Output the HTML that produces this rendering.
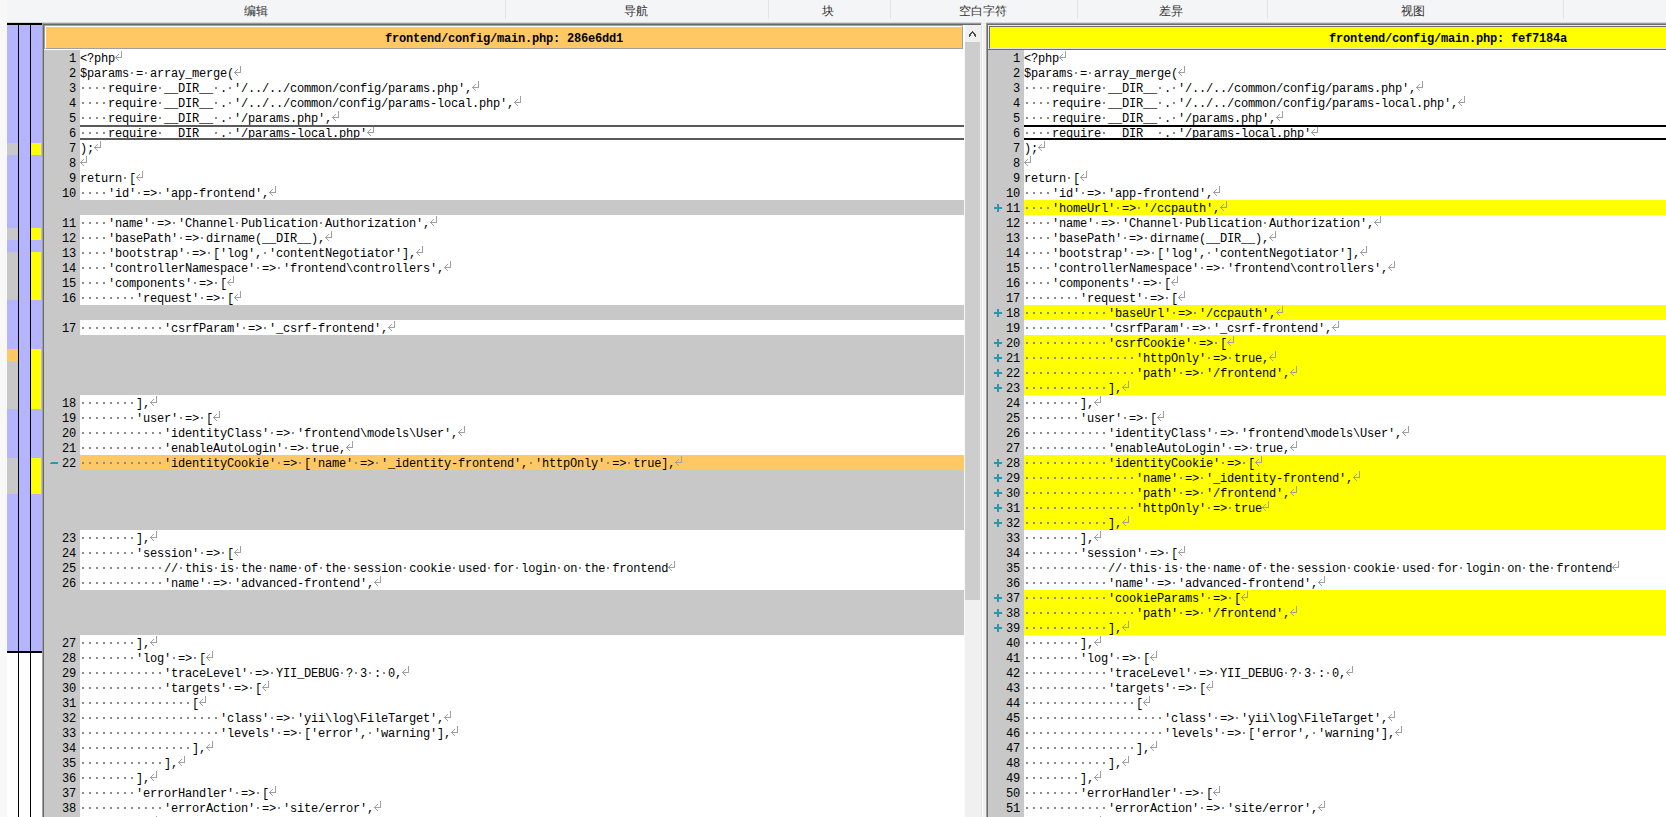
<!DOCTYPE html>
<html><head><meta charset="utf-8"><style>
*{margin:0;padding:0;box-sizing:border-box}
html,body{width:1666px;height:817px;overflow:hidden;background:#f8f8f8;font-family:"Liberation Sans",sans-serif}
#tb{position:absolute;left:7px;top:0;width:1659px;height:23px;background:#f4f5f7}
#tb .sep{position:absolute;top:0;width:1px;height:19px;background:#e1e3e6}
#tb .lb{position:absolute;top:4px;font-size:12px;line-height:14px;color:#333;white-space:nowrap}
.hl{position:absolute;height:1px}
#loc{position:absolute;left:7px;top:23px;width:35px;height:794px;background:#fff}
#loc .lav{position:absolute;left:0;top:0;width:35px;height:630px;background:#b4b4ff;border-top:2px solid #000;border-bottom:2px solid #000}
#loc .vl{position:absolute;top:0;width:1px;height:794px;background:#000}
#loc .blk{position:absolute}
.pane{position:absolute;top:50px;height:767px;overflow:hidden;background:#fff}
.row{position:absolute;left:0;width:100%;height:15px;font:12px/19px "Liberation Mono",monospace;letter-spacing:-0.2px;color:#000}
.row.f{background:#c8c8c8}
.row b{position:absolute;left:0;top:0;width:36px;height:15px;background:#c8c8c8;font-weight:normal;text-align:right;padding-right:4px}
.row p{position:absolute;left:36px;top:0;right:0;height:15px;white-space:pre;overflow:hidden}
.row.r p{background:#ffc864}
.row.a p{background:#ffff00}
.row.sel p{border-top:2px solid #5a5a5a;border-bottom:2px solid #5a5a5a;line-height:15px}
#pr .row.sel p{border-color:#000}
.row s{display:inline-block;vertical-align:top;height:15px;text-decoration:none;background:linear-gradient(90deg,#8c8c8c 2px,transparent 2px) 2px 7px/7px 2px repeat-x}
.row.sel s{height:11px;background-position:2px 5px}
.row i{display:inline-block;vertical-align:top;width:7px;height:15px;position:relative}
.row i::before{content:"";position:absolute;left:0;top:0;width:1px;height:1px;box-shadow:6px 1px #a0a0a0,6px 2px #a0a0a0,6px 3px #a0a0a0,6px 4px #a0a0a0,6px 5px #a0a0a0,6px 6px #a0a0a0,6px 7px #a0a0a0,0px 7px #a0a0a0,1px 7px #a0a0a0,2px 7px #a0a0a0,3px 7px #a0a0a0,4px 7px #a0a0a0,5px 7px #a0a0a0,3px 4px #a0a0a0,2px 5px #a0a0a0,1px 6px #a0a0a0,1px 8px #a0a0a0,2px 9px #a0a0a0,3px 10px #a0a0a0}
.row.sel i{height:11px}
.row.sel i::before{top:-2px}
.row u{position:absolute;left:6px;top:4px;width:1px;height:1px}
.row u.pl::before{content:"";position:absolute;left:0;top:0;width:1px;height:1px;box-shadow:0px 3px #2a97ad,0px 4px #2a97ad,1px 3px #2a97ad,1px 4px #2a97ad,2px 3px #2a97ad,2px 4px #2a97ad,3px 3px #2a97ad,3px 4px #2a97ad,4px 3px #2a97ad,4px 4px #2a97ad,5px 3px #2a97ad,5px 4px #2a97ad,6px 3px #2a97ad,6px 4px #2a97ad,7px 3px #2a97ad,7px 4px #2a97ad,3px 0px #2a97ad,3px 1px #2a97ad,3px 2px #2a97ad,3px 5px #2a97ad,3px 6px #2a97ad,3px 7px #2a97ad,4px 0px #2a97ad,4px 1px #2a97ad,4px 2px #2a97ad,4px 5px #2a97ad,4px 6px #2a97ad,4px 7px #2a97ad}
.row u.mi{top:7px}
.row u.mi::before{content:"";position:absolute;left:0;top:0;width:1px;height:1px;box-shadow:0px 0px #2a97ad,0px 1px #2a97ad,1px 0px #2a97ad,1px 1px #2a97ad,2px 0px #2a97ad,2px 1px #2a97ad,3px 0px #2a97ad,3px 1px #2a97ad,4px 0px #2a97ad,4px 1px #2a97ad,5px 0px #2a97ad,5px 1px #2a97ad,6px 0px #2a97ad,6px 1px #2a97ad,7px 0px #2a97ad,7px 1px #2a97ad}
.hdr{position:absolute;font:bold 12px/15px "Liberation Mono",monospace;letter-spacing:-0.2px;color:#000;text-align:center;white-space:nowrap}
#scr{position:absolute;left:965px;top:25px;width:16px;height:792px;background:#f0f0f0}
#scr .th{position:absolute;left:0;top:17px;width:15px;height:558px;background:#cdcdcd}
#scr .ch{position:absolute;left:4px;top:6px;width:1px;height:1px}
#scr .ch::before{content:"";position:absolute;left:0;top:0;width:1px;height:1px;box-shadow:3px 0px #505050,2px 1px #505050,3px 1px #505050,4px 1px #505050,1px 2px #505050,2px 2px #505050,4px 2px #505050,5px 2px #505050,0px 3px #505050,1px 3px #505050,5px 3px #505050,6px 3px #505050,0px 4px #505050,1px 4px #505050,5px 4px #505050,6px 4px #505050,0px 5px #505050,6px 5px #505050}
</style></head><body>
<div id="tb"><div class="sep" style="left:498px"></div><div class="sep" style="left:761px"></div><div class="sep" style="left:883px"></div><div class="sep" style="left:1070px"></div><div class="sep" style="left:1260px"></div><div class="sep" style="left:1556px"></div><div class="lb" style="left:209px;width:80px;text-align:center">编辑</div><div class="lb" style="left:589px;width:80px;text-align:center">导航</div><div class="lb" style="left:781px;width:80px;text-align:center">块</div><div class="lb" style="left:936px;width:80px;text-align:center">空白字符</div><div class="lb" style="left:1124px;width:80px;text-align:center">差异</div><div class="lb" style="left:1366px;width:80px;text-align:center">视图</div></div>
<div id="loc"><div class="lav"></div><div class="blk" style="left:0px;top:120px;width:11px;height:12px;background:#c8c8c8"></div><div class="blk" style="left:24px;top:120px;width:10px;height:12px;background:#ffff00"></div><div class="blk" style="left:0px;top:205px;width:11px;height:12px;background:#c8c8c8"></div><div class="blk" style="left:24px;top:205px;width:10px;height:12px;background:#ffff00"></div><div class="blk" style="left:0px;top:229px;width:11px;height:48px;background:#c8c8c8"></div><div class="blk" style="left:24px;top:229px;width:10px;height:48px;background:#ffff00"></div><div class="blk" style="left:0px;top:326px;width:11px;height:12px;background:#ffc864"></div><div class="blk" style="left:0px;top:338px;width:11px;height:48px;background:#c8c8c8"></div><div class="blk" style="left:24px;top:326px;width:10px;height:60px;background:#ffff00"></div><div class="blk" style="left:0px;top:435px;width:11px;height:36px;background:#c8c8c8"></div><div class="blk" style="left:24px;top:435px;width:10px;height:36px;background:#ffff00"></div><div class="vl" style="left:11px"></div><div class="vl" style="left:23px"></div></div>

<div class="hl" style="left:7px;top:22px;width:975px;background:#d8d8d8"></div>
<div class="hl" style="left:42px;top:23px;width:940px;background:#999"></div>
<div class="hl" style="left:43px;top:24px;width:938px;background:#696969"></div>
<div style="position:absolute;left:42px;top:23px;width:1px;height:794px;background:#a0a0a0"></div>
<div style="position:absolute;left:43px;top:24px;width:1px;height:793px;background:#696969"></div>
<div style="position:absolute;left:44px;top:25px;width:921px;height:25px;background:#fff"></div>
<div style="position:absolute;left:44px;top:25px;width:919px;height:1px;background:#a0a0a0"></div><div style="position:absolute;left:44px;top:25px;width:1px;height:24px;background:#a0a0a0"></div><div class="hdr" style="left:45px;top:26px;width:918px;height:23px;border-top:1px solid #fff;border-left:1px solid #fff;border-right:1px solid #a0a0a0;border-bottom:1px solid #a0a0a0;background:#ffc864;padding-top:5px">frontend/config/main.php: 286e6dd1</div>
<div style="position:absolute;left:981px;top:25px;width:5px;height:792px;background:#f0f0f0"></div>
<div style="position:absolute;left:981px;top:25px;width:1px;height:792px;background:#e3e3e3"></div>
<div style="position:absolute;left:982px;top:25px;width:1px;height:792px;background:#fff"></div>
<div class="hl" style="left:981px;top:23px;width:5px;background:#e8e8e8"></div>
<div class="hl" style="left:981px;top:24px;width:5px;background:#f4f4f4"></div>
<div class="hl" style="left:986px;top:22px;width:680px;background:#d8d8d8"></div>
<div class="hl" style="left:986px;top:23px;width:680px;background:#999"></div>
<div class="hl" style="left:987px;top:24px;width:679px;background:#696969"></div>
<div style="position:absolute;left:986px;top:23px;width:1px;height:794px;background:#a0a0a0"></div>
<div style="position:absolute;left:987px;top:24px;width:1px;height:793px;background:#696969"></div>
<div style="position:absolute;left:988px;top:25px;width:678px;height:24px;background:#ececec"></div><div style="position:absolute;left:987px;top:49px;width:679px;height:1px;background:#696969"></div>
<div class="hdr" style="left:989px;top:26px;width:918px;height:23px;border:1px solid #6a6a70;border-bottom-color:#e3e3ea;background:#ffff00;padding-top:5px">frontend/config/main.php: fef7184a</div>
<div id="scr"><div class="ch"></div><div class="th"></div></div>

<div class="pane" id="pl" style="left:44px;width:920px">
<div class="row n" style="top:0px"><b>1</b><p>&lt;?php<i></i></p></div>
<div class="row n" style="top:15px"><b>2</b><p>$params<s style="width:7px"></s>=<s style="width:7px"></s>array_merge(<i></i></p></div>
<div class="row n" style="top:30px"><b>3</b><p><s style="width:28px"></s>require<s style="width:7px"></s>__DIR__<s style="width:7px"></s>.<s style="width:7px"></s>'/../../common/config/params.php',<i></i></p></div>
<div class="row n" style="top:45px"><b>4</b><p><s style="width:28px"></s>require<s style="width:7px"></s>__DIR__<s style="width:7px"></s>.<s style="width:7px"></s>'/../../common/config/params-local.php',<i></i></p></div>
<div class="row n" style="top:60px"><b>5</b><p><s style="width:28px"></s>require<s style="width:7px"></s>__DIR__<s style="width:7px"></s>.<s style="width:7px"></s>'/params.php',<i></i></p></div>
<div class="row n sel" style="top:75px"><b>6</b><p><s style="width:28px"></s>require<s style="width:7px"></s>__DIR__<s style="width:7px"></s>.<s style="width:7px"></s>'/params-local.php'<i></i></p></div>
<div class="row n" style="top:90px"><b>7</b><p>);<i></i></p></div>
<div class="row n" style="top:105px"><b>8</b><p><i></i></p></div>
<div class="row n" style="top:120px"><b>9</b><p>return<s style="width:7px"></s>[<i></i></p></div>
<div class="row n" style="top:135px"><b>10</b><p><s style="width:28px"></s>'id'<s style="width:7px"></s>=&gt;<s style="width:7px"></s>'app-frontend',<i></i></p></div>
<div class="row f" style="top:150px"></div>
<div class="row n" style="top:165px"><b>11</b><p><s style="width:28px"></s>'name'<s style="width:7px"></s>=&gt;<s style="width:7px"></s>'Channel<s style="width:7px"></s>Publication<s style="width:7px"></s>Authorization',<i></i></p></div>
<div class="row n" style="top:180px"><b>12</b><p><s style="width:28px"></s>'basePath'<s style="width:7px"></s>=&gt;<s style="width:7px"></s>dirname(__DIR__),<i></i></p></div>
<div class="row n" style="top:195px"><b>13</b><p><s style="width:28px"></s>'bootstrap'<s style="width:7px"></s>=&gt;<s style="width:7px"></s>['log',<s style="width:7px"></s>'contentNegotiator'],<i></i></p></div>
<div class="row n" style="top:210px"><b>14</b><p><s style="width:28px"></s>'controllerNamespace'<s style="width:7px"></s>=&gt;<s style="width:7px"></s>'frontend\controllers',<i></i></p></div>
<div class="row n" style="top:225px"><b>15</b><p><s style="width:28px"></s>'components'<s style="width:7px"></s>=&gt;<s style="width:7px"></s>[<i></i></p></div>
<div class="row n" style="top:240px"><b>16</b><p><s style="width:56px"></s>'request'<s style="width:7px"></s>=&gt;<s style="width:7px"></s>[<i></i></p></div>
<div class="row f" style="top:255px"></div>
<div class="row n" style="top:270px"><b>17</b><p><s style="width:84px"></s>'csrfParam'<s style="width:7px"></s>=&gt;<s style="width:7px"></s>'_csrf-frontend',<i></i></p></div>
<div class="row f" style="top:285px"></div>
<div class="row f" style="top:300px"></div>
<div class="row f" style="top:315px"></div>
<div class="row f" style="top:330px"></div>
<div class="row n" style="top:345px"><b>18</b><p><s style="width:56px"></s>],<i></i></p></div>
<div class="row n" style="top:360px"><b>19</b><p><s style="width:56px"></s>'user'<s style="width:7px"></s>=&gt;<s style="width:7px"></s>[<i></i></p></div>
<div class="row n" style="top:375px"><b>20</b><p><s style="width:84px"></s>'identityClass'<s style="width:7px"></s>=&gt;<s style="width:7px"></s>'frontend\models\User',<i></i></p></div>
<div class="row n" style="top:390px"><b>21</b><p><s style="width:84px"></s>'enableAutoLogin'<s style="width:7px"></s>=&gt;<s style="width:7px"></s>true,<i></i></p></div>
<div class="row r" style="top:405px"><b><u class="mi"></u>22</b><p><s style="width:84px"></s>'identityCookie'<s style="width:7px"></s>=&gt;<s style="width:7px"></s>['name'<s style="width:7px"></s>=&gt;<s style="width:7px"></s>'_identity-frontend',<s style="width:7px"></s>'httpOnly'<s style="width:7px"></s>=&gt;<s style="width:7px"></s>true],<i></i></p></div>
<div class="row f" style="top:420px"></div>
<div class="row f" style="top:435px"></div>
<div class="row f" style="top:450px"></div>
<div class="row f" style="top:465px"></div>
<div class="row n" style="top:480px"><b>23</b><p><s style="width:56px"></s>],<i></i></p></div>
<div class="row n" style="top:495px"><b>24</b><p><s style="width:56px"></s>'session'<s style="width:7px"></s>=&gt;<s style="width:7px"></s>[<i></i></p></div>
<div class="row n" style="top:510px"><b>25</b><p><s style="width:84px"></s>//<s style="width:7px"></s>this<s style="width:7px"></s>is<s style="width:7px"></s>the<s style="width:7px"></s>name<s style="width:7px"></s>of<s style="width:7px"></s>the<s style="width:7px"></s>session<s style="width:7px"></s>cookie<s style="width:7px"></s>used<s style="width:7px"></s>for<s style="width:7px"></s>login<s style="width:7px"></s>on<s style="width:7px"></s>the<s style="width:7px"></s>frontend<i></i></p></div>
<div class="row n" style="top:525px"><b>26</b><p><s style="width:84px"></s>'name'<s style="width:7px"></s>=&gt;<s style="width:7px"></s>'advanced-frontend',<i></i></p></div>
<div class="row f" style="top:540px"></div>
<div class="row f" style="top:555px"></div>
<div class="row f" style="top:570px"></div>
<div class="row n" style="top:585px"><b>27</b><p><s style="width:56px"></s>],<i></i></p></div>
<div class="row n" style="top:600px"><b>28</b><p><s style="width:56px"></s>'log'<s style="width:7px"></s>=&gt;<s style="width:7px"></s>[<i></i></p></div>
<div class="row n" style="top:615px"><b>29</b><p><s style="width:84px"></s>'traceLevel'<s style="width:7px"></s>=&gt;<s style="width:7px"></s>YII_DEBUG<s style="width:7px"></s>?<s style="width:7px"></s>3<s style="width:7px"></s>:<s style="width:7px"></s>0,<i></i></p></div>
<div class="row n" style="top:630px"><b>30</b><p><s style="width:84px"></s>'targets'<s style="width:7px"></s>=&gt;<s style="width:7px"></s>[<i></i></p></div>
<div class="row n" style="top:645px"><b>31</b><p><s style="width:112px"></s>[<i></i></p></div>
<div class="row n" style="top:660px"><b>32</b><p><s style="width:140px"></s>'class'<s style="width:7px"></s>=&gt;<s style="width:7px"></s>'yii\log\FileTarget',<i></i></p></div>
<div class="row n" style="top:675px"><b>33</b><p><s style="width:140px"></s>'levels'<s style="width:7px"></s>=&gt;<s style="width:7px"></s>['error',<s style="width:7px"></s>'warning'],<i></i></p></div>
<div class="row n" style="top:690px"><b>34</b><p><s style="width:112px"></s>],<i></i></p></div>
<div class="row n" style="top:705px"><b>35</b><p><s style="width:84px"></s>],<i></i></p></div>
<div class="row n" style="top:720px"><b>36</b><p><s style="width:56px"></s>],<i></i></p></div>
<div class="row n" style="top:735px"><b>37</b><p><s style="width:56px"></s>'errorHandler'<s style="width:7px"></s>=&gt;<s style="width:7px"></s>[<i></i></p></div>
<div class="row n" style="top:750px"><b>38</b><p><s style="width:84px"></s>'errorAction'<s style="width:7px"></s>=&gt;<s style="width:7px"></s>'site/error',<i></i></p></div>
<div class="row n" style="top:765px"><b>39</b><p><s style="width:56px"></s>],<i></i></p></div>
</div>
<div class="pane" id="pr" style="left:988px;width:678px">
<div class="row n" style="top:0px"><b>1</b><p>&lt;?php<i></i></p></div>
<div class="row n" style="top:15px"><b>2</b><p>$params<s style="width:7px"></s>=<s style="width:7px"></s>array_merge(<i></i></p></div>
<div class="row n" style="top:30px"><b>3</b><p><s style="width:28px"></s>require<s style="width:7px"></s>__DIR__<s style="width:7px"></s>.<s style="width:7px"></s>'/../../common/config/params.php',<i></i></p></div>
<div class="row n" style="top:45px"><b>4</b><p><s style="width:28px"></s>require<s style="width:7px"></s>__DIR__<s style="width:7px"></s>.<s style="width:7px"></s>'/../../common/config/params-local.php',<i></i></p></div>
<div class="row n" style="top:60px"><b>5</b><p><s style="width:28px"></s>require<s style="width:7px"></s>__DIR__<s style="width:7px"></s>.<s style="width:7px"></s>'/params.php',<i></i></p></div>
<div class="row n sel" style="top:75px"><b>6</b><p><s style="width:28px"></s>require<s style="width:7px"></s>__DIR__<s style="width:7px"></s>.<s style="width:7px"></s>'/params-local.php'<i></i></p></div>
<div class="row n" style="top:90px"><b>7</b><p>);<i></i></p></div>
<div class="row n" style="top:105px"><b>8</b><p><i></i></p></div>
<div class="row n" style="top:120px"><b>9</b><p>return<s style="width:7px"></s>[<i></i></p></div>
<div class="row n" style="top:135px"><b>10</b><p><s style="width:28px"></s>'id'<s style="width:7px"></s>=&gt;<s style="width:7px"></s>'app-frontend',<i></i></p></div>
<div class="row a" style="top:150px"><b><u class="pl"></u>11</b><p><s style="width:28px"></s>'homeUrl'<s style="width:7px"></s>=&gt;<s style="width:7px"></s>'/ccpauth',<i></i></p></div>
<div class="row n" style="top:165px"><b>12</b><p><s style="width:28px"></s>'name'<s style="width:7px"></s>=&gt;<s style="width:7px"></s>'Channel<s style="width:7px"></s>Publication<s style="width:7px"></s>Authorization',<i></i></p></div>
<div class="row n" style="top:180px"><b>13</b><p><s style="width:28px"></s>'basePath'<s style="width:7px"></s>=&gt;<s style="width:7px"></s>dirname(__DIR__),<i></i></p></div>
<div class="row n" style="top:195px"><b>14</b><p><s style="width:28px"></s>'bootstrap'<s style="width:7px"></s>=&gt;<s style="width:7px"></s>['log',<s style="width:7px"></s>'contentNegotiator'],<i></i></p></div>
<div class="row n" style="top:210px"><b>15</b><p><s style="width:28px"></s>'controllerNamespace'<s style="width:7px"></s>=&gt;<s style="width:7px"></s>'frontend\controllers',<i></i></p></div>
<div class="row n" style="top:225px"><b>16</b><p><s style="width:28px"></s>'components'<s style="width:7px"></s>=&gt;<s style="width:7px"></s>[<i></i></p></div>
<div class="row n" style="top:240px"><b>17</b><p><s style="width:56px"></s>'request'<s style="width:7px"></s>=&gt;<s style="width:7px"></s>[<i></i></p></div>
<div class="row a" style="top:255px"><b><u class="pl"></u>18</b><p><s style="width:84px"></s>'baseUrl'<s style="width:7px"></s>=&gt;<s style="width:7px"></s>'/ccpauth',<i></i></p></div>
<div class="row n" style="top:270px"><b>19</b><p><s style="width:84px"></s>'csrfParam'<s style="width:7px"></s>=&gt;<s style="width:7px"></s>'_csrf-frontend',<i></i></p></div>
<div class="row a" style="top:285px"><b><u class="pl"></u>20</b><p><s style="width:84px"></s>'csrfCookie'<s style="width:7px"></s>=&gt;<s style="width:7px"></s>[<i></i></p></div>
<div class="row a" style="top:300px"><b><u class="pl"></u>21</b><p><s style="width:112px"></s>'httpOnly'<s style="width:7px"></s>=&gt;<s style="width:7px"></s>true,<i></i></p></div>
<div class="row a" style="top:315px"><b><u class="pl"></u>22</b><p><s style="width:112px"></s>'path'<s style="width:7px"></s>=&gt;<s style="width:7px"></s>'/frontend',<i></i></p></div>
<div class="row a" style="top:330px"><b><u class="pl"></u>23</b><p><s style="width:84px"></s>],<i></i></p></div>
<div class="row n" style="top:345px"><b>24</b><p><s style="width:56px"></s>],<i></i></p></div>
<div class="row n" style="top:360px"><b>25</b><p><s style="width:56px"></s>'user'<s style="width:7px"></s>=&gt;<s style="width:7px"></s>[<i></i></p></div>
<div class="row n" style="top:375px"><b>26</b><p><s style="width:84px"></s>'identityClass'<s style="width:7px"></s>=&gt;<s style="width:7px"></s>'frontend\models\User',<i></i></p></div>
<div class="row n" style="top:390px"><b>27</b><p><s style="width:84px"></s>'enableAutoLogin'<s style="width:7px"></s>=&gt;<s style="width:7px"></s>true,<i></i></p></div>
<div class="row a" style="top:405px"><b><u class="pl"></u>28</b><p><s style="width:84px"></s>'identityCookie'<s style="width:7px"></s>=&gt;<s style="width:7px"></s>[<i></i></p></div>
<div class="row a" style="top:420px"><b><u class="pl"></u>29</b><p><s style="width:112px"></s>'name'<s style="width:7px"></s>=&gt;<s style="width:7px"></s>'_identity-frontend',<i></i></p></div>
<div class="row a" style="top:435px"><b><u class="pl"></u>30</b><p><s style="width:112px"></s>'path'<s style="width:7px"></s>=&gt;<s style="width:7px"></s>'/frontend',<i></i></p></div>
<div class="row a" style="top:450px"><b><u class="pl"></u>31</b><p><s style="width:112px"></s>'httpOnly'<s style="width:7px"></s>=&gt;<s style="width:7px"></s>true<i></i></p></div>
<div class="row a" style="top:465px"><b><u class="pl"></u>32</b><p><s style="width:84px"></s>],<i></i></p></div>
<div class="row n" style="top:480px"><b>33</b><p><s style="width:56px"></s>],<i></i></p></div>
<div class="row n" style="top:495px"><b>34</b><p><s style="width:56px"></s>'session'<s style="width:7px"></s>=&gt;<s style="width:7px"></s>[<i></i></p></div>
<div class="row n" style="top:510px"><b>35</b><p><s style="width:84px"></s>//<s style="width:7px"></s>this<s style="width:7px"></s>is<s style="width:7px"></s>the<s style="width:7px"></s>name<s style="width:7px"></s>of<s style="width:7px"></s>the<s style="width:7px"></s>session<s style="width:7px"></s>cookie<s style="width:7px"></s>used<s style="width:7px"></s>for<s style="width:7px"></s>login<s style="width:7px"></s>on<s style="width:7px"></s>the<s style="width:7px"></s>frontend<i></i></p></div>
<div class="row n" style="top:525px"><b>36</b><p><s style="width:84px"></s>'name'<s style="width:7px"></s>=&gt;<s style="width:7px"></s>'advanced-frontend',<i></i></p></div>
<div class="row a" style="top:540px"><b><u class="pl"></u>37</b><p><s style="width:84px"></s>'cookieParams'<s style="width:7px"></s>=&gt;<s style="width:7px"></s>[<i></i></p></div>
<div class="row a" style="top:555px"><b><u class="pl"></u>38</b><p><s style="width:112px"></s>'path'<s style="width:7px"></s>=&gt;<s style="width:7px"></s>'/frontend',<i></i></p></div>
<div class="row a" style="top:570px"><b><u class="pl"></u>39</b><p><s style="width:84px"></s>],<i></i></p></div>
<div class="row n" style="top:585px"><b>40</b><p><s style="width:56px"></s>],<i></i></p></div>
<div class="row n" style="top:600px"><b>41</b><p><s style="width:56px"></s>'log'<s style="width:7px"></s>=&gt;<s style="width:7px"></s>[<i></i></p></div>
<div class="row n" style="top:615px"><b>42</b><p><s style="width:84px"></s>'traceLevel'<s style="width:7px"></s>=&gt;<s style="width:7px"></s>YII_DEBUG<s style="width:7px"></s>?<s style="width:7px"></s>3<s style="width:7px"></s>:<s style="width:7px"></s>0,<i></i></p></div>
<div class="row n" style="top:630px"><b>43</b><p><s style="width:84px"></s>'targets'<s style="width:7px"></s>=&gt;<s style="width:7px"></s>[<i></i></p></div>
<div class="row n" style="top:645px"><b>44</b><p><s style="width:112px"></s>[<i></i></p></div>
<div class="row n" style="top:660px"><b>45</b><p><s style="width:140px"></s>'class'<s style="width:7px"></s>=&gt;<s style="width:7px"></s>'yii\log\FileTarget',<i></i></p></div>
<div class="row n" style="top:675px"><b>46</b><p><s style="width:140px"></s>'levels'<s style="width:7px"></s>=&gt;<s style="width:7px"></s>['error',<s style="width:7px"></s>'warning'],<i></i></p></div>
<div class="row n" style="top:690px"><b>47</b><p><s style="width:112px"></s>],<i></i></p></div>
<div class="row n" style="top:705px"><b>48</b><p><s style="width:84px"></s>],<i></i></p></div>
<div class="row n" style="top:720px"><b>49</b><p><s style="width:56px"></s>],<i></i></p></div>
<div class="row n" style="top:735px"><b>50</b><p><s style="width:56px"></s>'errorHandler'<s style="width:7px"></s>=&gt;<s style="width:7px"></s>[<i></i></p></div>
<div class="row n" style="top:750px"><b>51</b><p><s style="width:84px"></s>'errorAction'<s style="width:7px"></s>=&gt;<s style="width:7px"></s>'site/error',<i></i></p></div>
<div class="row n" style="top:765px"><b>52</b><p><s style="width:56px"></s>],<i></i></p></div>
</div>
</body></html>
